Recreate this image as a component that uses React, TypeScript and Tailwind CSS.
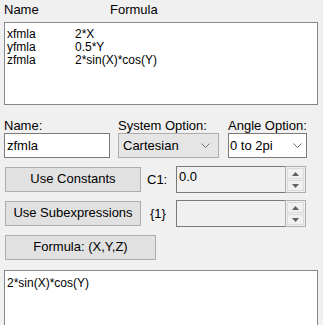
import React from "react";

const rows = [
  { name: "xfmla", formula: "2*X" },
  { name: "yfmla", formula: "0.5*Y" },
  { name: "zfmla", formula: "2*sin(X)*cos(Y)" },
];

function Chevron() {
  return (
    <svg width="9" height="5" viewBox="0 0 9 5" className="shrink-0">
      <polyline points="0.5,0.5 4.5,4.5 8.5,0.5" fill="none" stroke="#707070" strokeWidth="1" />
    </svg>
  );
}

function Button({ label, width }: { label: string; width: string }) {
  return (
    <div
      className={`${width} ml-[1px] flex h-[25px] items-center justify-center border border-[#adadad] bg-[#e1e1e1] pb-[1px]`}
    >
      {label}
    </div>
  );
}

// Windows-style numeric up/down; value may be empty.
function Spin({ value }: { value?: string }) {
  return (
    <div className="flex h-[27px] w-[130px]">
      <div className="flex-1 border-y border-l border-[#7a7a7a] bg-[#f0f0f0] pl-[2px] pt-[2px] leading-[15px]">
        {value}
      </div>
      <div className="flex w-[21px] flex-col gap-[1px] border border-[#adadad] bg-[#f0f0f0] p-[1px]">
        <div className="flex flex-1 items-center justify-center border border-[#dadada]">
          <svg width="7" height="4" viewBox="0 0 7 4">
            <polygon points="3.5,0 7,4 0,4" fill="#606060" />
          </svg>
        </div>
        <div className="flex flex-1 items-center justify-center border border-[#dadada]">
          <svg width="7" height="4" viewBox="0 0 7 4">
            <polygon points="0,0 7,0 3.5,4" fill="#606060" />
          </svg>
        </div>
      </div>
    </div>
  );
}

export default function App() {
  return (
    <div className="h-[325px] w-[323px] overflow-hidden bg-[#f0f0f0] pl-1 font-['Liberation_Sans',Arial,sans-serif] text-[13px] text-black">
      <div className="flex h-[22px] pt-[2px] leading-[15px]">
        <span className="w-[106px]">Name</span>
        <span>Formula</span>
      </div>

      <div className="h-[83px] w-[314px] border border-[#828790] bg-white pl-[2px] pt-[5px] text-[12px] leading-[13px]">
        {rows.map((r) => (
          <div key={r.name} className="flex">
            <span className="w-[68px]">{r.name}</span>
            <span>{r.formula}</span>
          </div>
        ))}
      </div>

      <div className="mt-[13px] flex h-[15px] leading-[15px]">
        <span className="w-[114px]">Name:</span>
        <span className="w-[110px]">System Option:</span>
        <span>Angle Option:</span>
      </div>

      <div className="flex h-[25px]">
        <div className="flex w-[106px] items-center border border-[#7a7a7a] bg-white pl-[2px]">zfmla</div>
        <div className="ml-[8px] flex w-[101px] items-center justify-between border border-[#adadad] bg-[#e5e5e5] pl-[4px] pr-[8px]">
          <span>Cartesian</span>
          <Chevron />
        </div>
        <div className="ml-[9px] flex w-[79px] items-center justify-between border border-[#7a7a7a] bg-white pl-[1px] pr-[4px]">
          <span>0 to 2pi</span>
          <Chevron />
        </div>
      </div>

      <div className="mt-[8px] flex h-[27px] items-center">
        <Button label="Use Constants" width="w-[136px]" />
        <span className="ml-[6px] w-[29px]">C1:</span>
        <Spin value="0.0" />
      </div>

      <div className="mt-[7px] flex h-[27px] items-center">
        <Button label="Use Subexpressions" width="w-[136px]" />
        <span className="ml-[6px] w-[29px] pl-[3px]">{"{1}"}</span>
        <Spin />
      </div>

      <div className="mt-[8px] flex">
        <Button label="Formula: (X,Y,Z)" width="w-[151px]" />
      </div>

      <div className="mt-[10px] h-[80px] w-[314px] border border-[#828790] bg-white pl-[2px] pt-[5px] text-[12px] leading-[14px]">
        2*sin(X)*cos(Y)
      </div>
    </div>
  );
}
